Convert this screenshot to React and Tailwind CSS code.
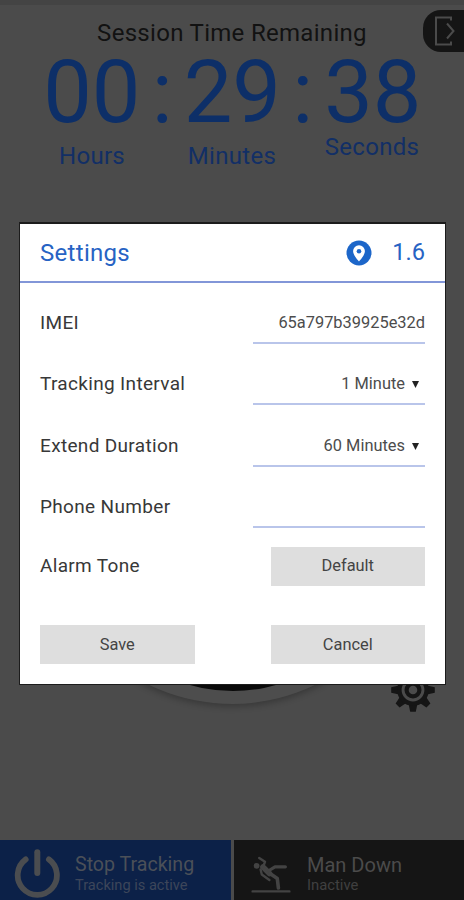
import React from "react";

function PowerIcon() {
  return (
    <svg className="block h-[54px] w-[48px] shrink-0" viewBox="0 0 48 54" fill="none" stroke="#4b4d50" strokeLinecap="round">
      <path d="M11.7 13.4A19.6 19.6 0 1 0 34.9 13.4" strokeWidth="5.8" />
      <path d="M23.3 6.3V27" strokeWidth="6" />
    </svg>
  );
}

function ManDownIcon() {
  return (
    <svg className="block h-[40px] w-[40px] shrink-0" viewBox="0 0 40 40" fill="none" stroke="#434343" strokeLinecap="round" strokeLinejoin="round">
      <circle cx="5.6" cy="10.8" r="2.9" fill="#434343" stroke="none" />
      <path d="M8.2 3L14 6.8L12.6 10.5" strokeWidth="2.4" />
      <path d="M12 12L18.5 18.5" strokeWidth="5.6" />
      <path d="M9.6 14.5L10.8 19.5L18.4 25" strokeWidth="2.4" />
      <path d="M18 15.5L24 11.8H34.4" strokeWidth="3.2" />
      <path d="M19 18.5L26.3 23.6L27.4 33" strokeWidth="3.6" />
      <path d="M1.6 36.4H38.4" strokeWidth="2.4" />
    </svg>
  );
}

function GearIcon() {
  return (
    <svg className="block h-[46px] w-[46px]" viewBox="-23 -23 46 46">
      <g fill="#151515">
        {[0, 45, 90, 135, 180, 225, 270, 315].map((a) => (
          <path key={a} d="M-4.4 -14L-2.8 -21.8H2.8L4.4 -14Z" transform={`rotate(${a})`} />
        ))}
      </g>
      <circle r="13.6" fill="none" stroke="#151515" strokeWidth="4.4" />
      <circle r="6.4" fill="none" stroke="#151515" strokeWidth="4.2" />
    </svg>
  );
}

function PinIcon() {
  return (
    <svg className="block h-[26px] w-[26px]" viewBox="0 0 26 26">
      <circle cx="13" cy="13" r="12.5" fill="#1c66c9" />
      <path d="M13 5.2a5.9 5.9 0 0 0-5.9 5.9c0 4.2 5.9 10.4 5.9 10.4s5.9-6.2 5.9-10.4A5.9 5.9 0 0 0 13 5.2z" fill="#fff" />
      <circle cx="13" cy="11.2" r="2.3" fill="#1c66c9" />
    </svg>
  );
}

function Row({ label, children }) {
  return (
    <div className="flex h-[61.5px] items-end justify-between">
      <div className="h-[42px] text-[19px] leading-[42px] tracking-[0.33px] text-[#383838]">{label}</div>
      <div className="flex h-[42px] w-[172.5px] items-center justify-end border-b-2 border-[#b9c5ea] pt-[3px] text-[16.4px] text-[#4c4c4c]">
        {children}
      </div>
    </div>
  );
}

function Choice({ text }) {
  return (
    <>
      <span>{text}</span>
      <svg className="mr-[6px] ml-[7px] h-[7px] w-[7px]" viewBox="0 0 7 7">
        <path d="M0 0H7L3.5 7Z" fill="#222" />
      </svg>
    </>
  );
}

function Button({ children }) {
  return (
    <button className="block h-[39px] w-[154.5px] bg-[#dedede] text-center text-[16.4px] leading-[38px] tracking-normal text-[#444]">{children}</button>
  );
}

function Colon() {
  return <span className="w-[43px] text-center">:</span>;
}

export default function App() {
  return (
    <div className="relative flex h-[900px] w-[464px] flex-col overflow-hidden bg-[#4b4b4b] font-['Roboto',sans-serif]">
      <div className="h-[5px] shrink-0 bg-[#444]" />
      <div className="h-[56px] text-center text-[24px] leading-[56px] tracking-[0.3px] text-[#121212]">Session Time Remaining</div>
      <div className="flex h-[64px] justify-center pl-[1px] text-[86.5px] leading-[64px] text-[#0d2f68]">
        <span className="w-[97.5px]">00</span>
        <Colon />
        <span className="w-[97.5px]">29</span>
        <Colon />
        <span className="w-[97.5px]">38</span>
      </div>
      <div className="flex h-[60px] justify-center text-[24px] leading-[24px] tracking-[0.3px] text-[#122f66]">
        <span className="w-[140px] pt-[19px] text-center">Hours</span>
        <span className="w-[140px] pt-[19px] text-center">Minutes</span>
        <span className="w-[140px] pt-[10px] text-center">Seconds</span>
      </div>

      <div className="absolute top-[10px] right-0 flex h-[42px] w-[41px] items-center rounded-l-[18px] bg-[#151515] pl-[11px]">
        <svg className="h-[30px] w-[22px]" viewBox="0 0 22 30" fill="none" stroke="#4b4b4b" strokeWidth="2">
          <path d="M17 4.5V1.5H2V28.5H17V25.5" />
          <path d="M13 7.5L19.5 15L13 22.5" />
        </svg>
      </div>

      <div className="absolute top-[324px] left-[42px] h-[380px] w-[380px] rounded-full bg-[#4d4d4d] shadow-[0_3px_6px_rgba(0,0,0,0.24)]" />
      <div className="absolute top-[373px] left-[74px] h-[318px] w-[318px] rounded-full bg-[#0a0a0a]" />
      <div className="absolute top-[667px] left-[390px]">
        <GearIcon />
      </div>

      <div className="mt-auto flex h-[60px] shrink-0">
        <div className="flex w-[231px] bg-[#0c2148] pt-[6px] pl-[14px]">
          <PowerIcon />
          <div className="pt-[7px] pl-[13px] text-[#4b5058]">
            <div className="text-[19.6px] leading-[24px]">Stop Tracking</div>
            <div className="text-[14.6px] leading-[17px] text-[#3d465a]">Tracking is active</div>
          </div>
        </div>
        <div className="w-[3px] bg-[#4b4b4b]" />
        <div className="flex flex-1 bg-[#151515] pt-[13px] pl-[17px]">
          <div className="pt-[2px]">
            <ManDownIcon />
          </div>
          <div className="pl-[16px] text-[#4b4b4b]">
            <div className="text-[20px] leading-[24px]">Man Down</div>
            <div className="text-[14.8px] leading-[17px] text-[#404040]">Inactive</div>
          </div>
        </div>
      </div>

      <div className="absolute top-[222px] left-[19px] h-[463px] w-[427px] border border-t-2 border-[#1c1c1c] bg-white">
        <div className="flex h-[59px] items-center border-b-2 border-[#8296d8] px-[20px] text-[24px] text-[#2763c4]">
          <span className="tracking-[0.3px]">Settings</span>
          <span className="mr-[20px] ml-auto">
            <PinIcon />
          </span>
          <span className="text-[23.6px]">1.6</span>
        </div>
        <div className="-mt-[1px] px-[20px]">
          <Row label="IMEI">65a797b39925e32d</Row>
          <Row label="Tracking Interval">
            <Choice text="1 Minute" />
          </Row>
          <Row label="Extend Duration">
            <Choice text="60 Minutes" />
          </Row>
          <Row label="Phone Number" />
          <div className="mt-[18.5px] flex items-center justify-between text-[19px] tracking-[0.33px] text-[#383838]">
            Alarm Tone
            <Button>Default</Button>
          </div>
          <div className="mt-[39.5px] flex justify-between">
            <Button>Save</Button>
            <Button>Cancel</Button>
          </div>
        </div>
      </div>
    </div>
  );
}
